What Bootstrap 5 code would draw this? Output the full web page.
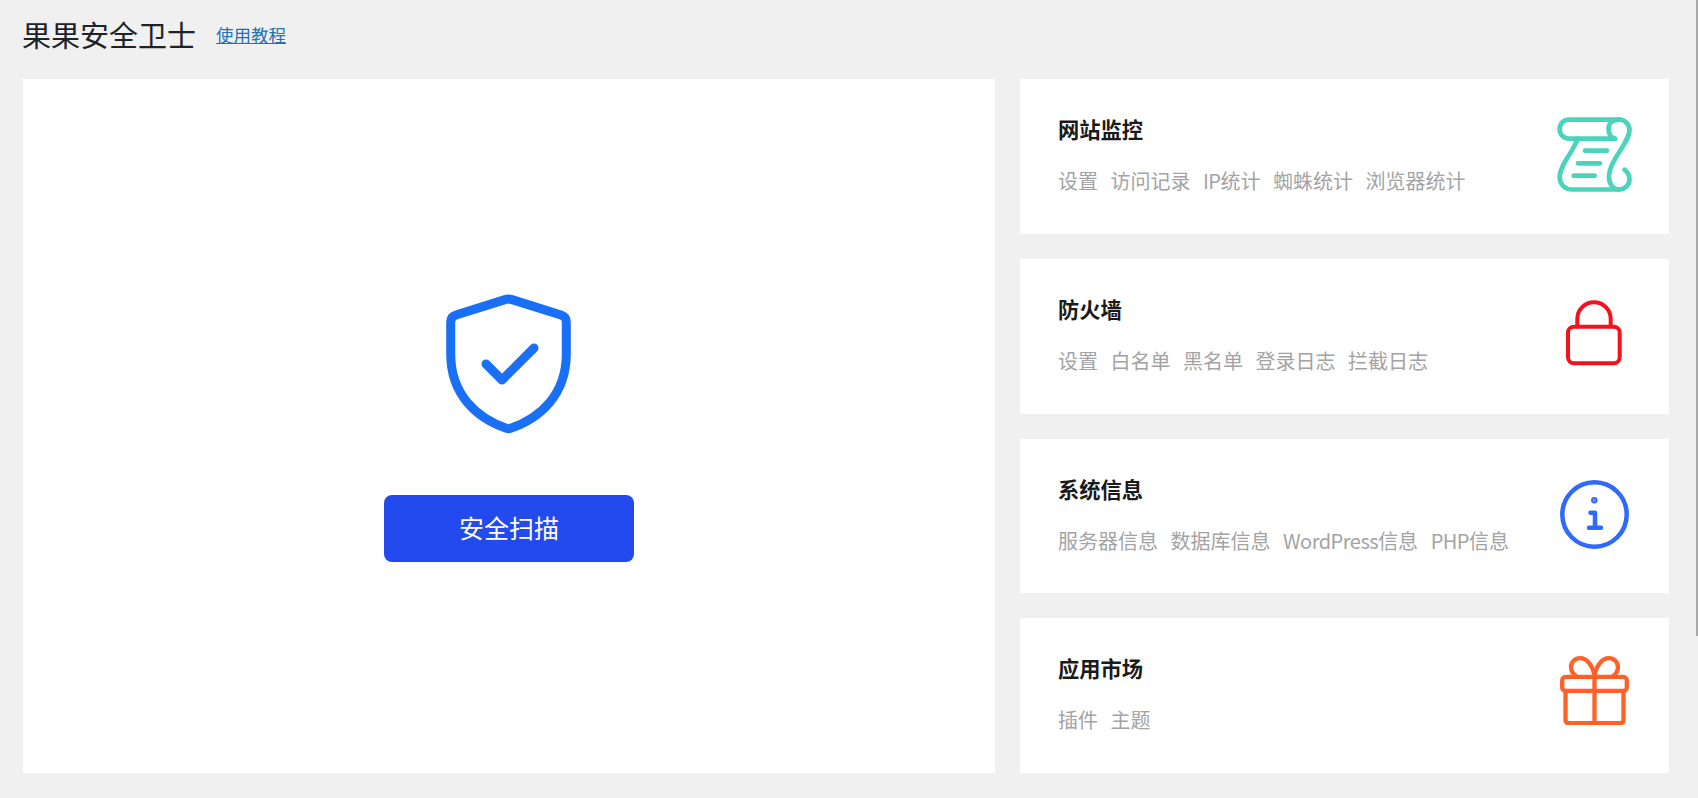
<!DOCTYPE html>
<html lang="zh-CN">

<head>
	<meta charset="utf-8">
	<meta name="viewport" content="width=device-width, initial-scale=1">
	<title>果果安全卫士</title>
	<link href="https://cdn.jsdelivr.net/npm/bootstrap@5.3.0/dist/css/bootstrap.min.css" rel="stylesheet">
	<style>
		html, body { height: 100%; overflow: hidden; }
		body { background: #f0f0f1; color: #1d2327; font-family: "Noto Sans CJK SC", sans-serif; }
		.wrap-page { padding: 0 29px 25px 22px; height: 798px; }
		.page-head { height: 79px; padding-bottom: 10px; }
		.page-title { font-size: 29px; font-weight: 400; margin: 0 20px 0 0; }
		.doc-link { font-size: 17.5px; color: #2271b1; margin-top: 2px; }
		.scan-panel { width: 972px; gap: 61px; padding-top: 3px; margin-left: 1px; }
		.scan-btn { width: 250px; height: 67px; font-size: 25px; background: #224aef; border: 0; border-radius: 8px; color: #fff; }
		.side-col { width: 649px; gap: 25px; }
		.tool-card { flex: 1 1 0; padding: 35px 25px 0 38px; }
		.tool-name { font-size: 21.25px; font-weight: 700; color: #1a1a1a; margin: 0 0 22px; line-height: 30px; }
		.tool-links { gap: 12.5px; font-size: 20px; line-height: 30px; }
		.tool-links a { color: #a3a3a3; text-decoration: none; }
		.latin-txt { letter-spacing: -.5px; }
		.tool-ico { width: 100px; height: 78px; }
		.ico-scroll { margin-top: 2px; }
		.ico-info { margin-top: 4px; }
		.ico-gift { margin-top: -4px; }
		.scroll-thumb { position: absolute; top: 0; right: 0; width: 2px; height: 636px; background: #a8a8a8; }
	</style>
</head>

<body>
	<div class="wrap-page d-flex flex-column">
		<div class="page-head d-flex align-items-center">
			<h1 class="page-title">果果安全卫士</h1>
			<a class="doc-link" href="#">使用教程</a>
		</div>

		<div class="d-flex flex-fill justify-content-between">
			<div class="scan-panel bg-white d-flex flex-column align-items-center justify-content-center">
				<svg width="126" height="140" viewBox="0 0 126 140" fill="none" stroke="#196ff5" stroke-width="9" stroke-linecap="round" stroke-linejoin="round">
					<path d="M59 5.6Q62.5 4.5 66 5.6L115 21Q120.3 22.7 120.3 28V60C120.3 100 95 124 64 134.4Q62.5 135 61 134.4C30 124 4.7 100 4.7 60V28Q4.7 22.7 10 21Z" />
					<path d="M40 70L56 86L88 54" />
				</svg>
				<button type="button" class="btn scan-btn">安全扫描</button>
			</div>

			<div class="side-col d-flex flex-column">
				<div class="card tool-card border-0 rounded-0 flex-row justify-content-between">
					<div>
						<h5 class="tool-name">网站监控</h5>
						<div class="tool-links d-flex">
							<a href="#">设置</a><a href="#">访问记录</a><a href="#"><span class="latin-txt">IP</span>统计</a><a href="#">蜘蛛统计</a><a href="#">浏览器统计</a>
						</div>
					</div>
					<div class="tool-ico d-flex align-items-center justify-content-center">
						<svg class="ico-scroll" width="75" height="75" viewBox="0 0 75 75" fill="none" stroke="#4ad4bc" stroke-width="4.7" stroke-linecap="round" stroke-linejoin="round">
							<path d="M58 21.7H12C6.5 21.7 2.7 17.5 2.7 12.2S6.5 2.7 12 2.7H62C68.5 2.7 72.5 7.5 72.5 13C72.5 26 52 43 52 60C52 67 56 72.5 62 72.5C68 72.5 72.5 68 72.5 62.5C72.5 58.5 70.5 55 67.5 52.7" />
							<path d="M62 2.7C55 2.7 51.5 7 51.5 12C51.5 17 54 20.5 58 21.7" />
							<path d="M20.7 21.7C15 37 2.7 48 2.7 60C2.7 67.5 8 72.5 15 72.5H62" />
							<path d="M28 33.7H50M21 46.3H43M16.7 58.7H37.7" />
						</svg>
					</div>
				</div>

				<div class="card tool-card border-0 rounded-0 flex-row justify-content-between">
					<div>
						<h5 class="tool-name">防火墙</h5>
						<div class="tool-links d-flex">
							<a href="#">设置</a><a href="#">白名单</a><a href="#">黑名单</a><a href="#">登录日志</a><a href="#">拦截日志</a>
						</div>
					</div>
					<div class="tool-ico d-flex align-items-center justify-content-center">
						<svg width="57" height="66" viewBox="0 0 57 66" fill="none" stroke="#f5111d" stroke-width="4" stroke-linecap="round" stroke-linejoin="round">
							<rect x="2" y="26.7" width="51.7" height="36.6" rx="6" />
							<path d="M11.3 26V19A16.7 16.7 0 0 1 44.7 19V26" />
						</svg>
					</div>
				</div>

				<div class="card tool-card border-0 rounded-0 flex-row justify-content-between">
					<div>
						<h5 class="tool-name">系统信息</h5>
						<div class="tool-links d-flex">
							<a href="#">服务器信息</a><a href="#">数据库信息</a><a href="#"><span class="latin-txt">WordPress</span>信息</a><a href="#"><span class="latin-txt">PHP</span>信息</a>
						</div>
					</div>
					<div class="tool-ico d-flex align-items-center justify-content-center">
						<svg class="ico-info" width="69" height="69" viewBox="0 0 69 69" fill="none" stroke="#2f69fe" stroke-width="4.5" stroke-linecap="round" stroke-linejoin="round">
							<circle cx="34.5" cy="34.5" r="32.2" />
							<circle cx="34.3" cy="20.3" r="1" stroke-width="4.5" fill="#2f69fe" />
							<path d="M30.5 32.7H35V47.7M29 47.7H41" />
						</svg>
					</div>
				</div>

				<div class="card tool-card border-0 rounded-0 flex-row justify-content-between">
					<div>
						<h5 class="tool-name">应用市场</h5>
						<div class="tool-links d-flex">
							<a href="#">插件</a><a href="#">主题</a>
						</div>
					</div>
					<div class="tool-ico d-flex align-items-center justify-content-center">
						<svg class="ico-gift" width="69" height="69" viewBox="0 0 69 69" fill="none" stroke="#ff6127" stroke-width="4.3" stroke-linecap="round" stroke-linejoin="round">
							<rect x="2.2" y="20.9" width="64.6" height="14" rx="3.5" />
							<path d="M5.5 35V63.5Q5.5 67.2 9 67.2H60Q63.5 67.2 63.5 63.5V35M34.5 20V67" />
							<path d="M34.5 20C33 10 27 2.2 20 2.2C15 2.2 11 6 11 11C11 15 13 18 16 20" />
							<path d="M34.5 20C36 10 42 2.2 49 2.2C54 2.2 58 6 58 11C58 15 56 18 53 20" />
						</svg>
					</div>
				</div>
			</div>
		</div>
	</div>
	<div class="scroll-thumb"></div>

	<script src="https://cdn.jsdelivr.net/npm/bootstrap@5.3.0/dist/js/bootstrap.bundle.min.js"></script>
</body>

</html>
